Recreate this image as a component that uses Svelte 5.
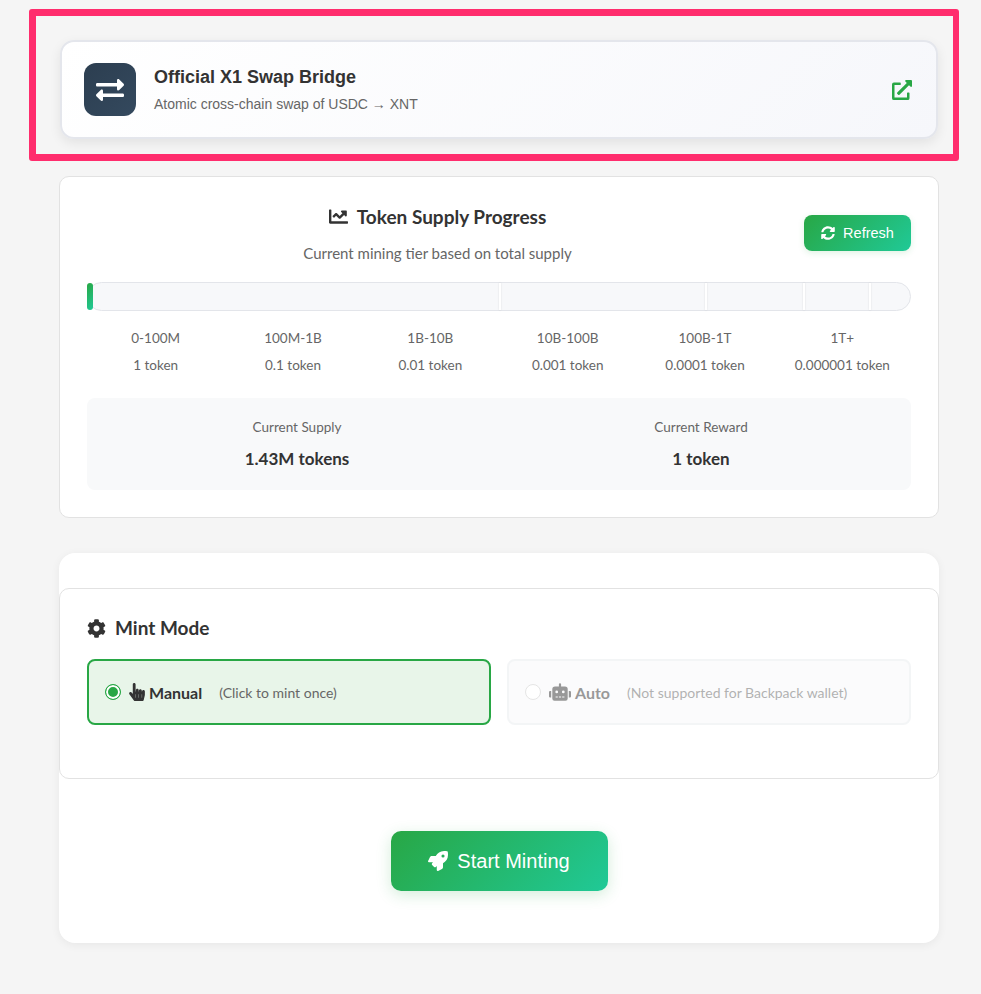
<script>
  const markers = [50, 75, 87, 95];
  const tiers = [
    { range: '0-100M', reward: '1 token' },
    { range: '100M-1B', reward: '0.1 token' },
    { range: '1B-10B', reward: '0.01 token' },
    { range: '10B-100B', reward: '0.001 token' },
    { range: '100B-1T', reward: '0.0001 token' },
    { range: '1T+', reward: '0.000001 token' },
  ];
</script>

<main class="page">
  <div class="highlight"></div>

  <a class="bridge" href="#bridge">
    <span class="bridge-icon">
      <svg viewBox="0 0 512 512" width="28" height="28" fill="#fff"><path d="M0 168v-16c0-13.255 10.745-24 24-24h360V80c0-21.367 25.899-32.042 40.971-16.971l80 80c9.372 9.373 9.372 24.569 0 33.941l-80 80C409.956 271.982 384 261.456 384 240v-48H24c-13.255 0-24-10.745-24-24zm488 152H128v-48c0-21.314-25.862-32.08-40.971-16.971l-80 80c-9.372 9.373-9.372 24.569 0 33.941l80 80C102.057 463.997 128 453.437 128 432v-48h360c13.255 0 24-10.745 24-24v-16c0-13.255-10.745-24-24-24z"/></svg>
    </span>
    <span class="bridge-text">
      <strong>Official X1 Swap Bridge</strong>
      <small>Atomic cross-chain swap of USDC → XNT</small>
    </span>
    <svg class="bridge-link" viewBox="0 0 512 512" width="20" height="20" fill="#28a745"><path d="M432,320H400a16,16,0,0,0-16,16V448H64V128H208a16,16,0,0,0,16-16V80a16,16,0,0,0-16-16H48A48,48,0,0,0,0,112V464a48,48,0,0,0,48,48H400a48,48,0,0,0,48-48V336A16,16,0,0,0,432,320ZM488,0h-128c-21.37,0-32.05,25.91-17,41l35.73,35.73L135,320.37a24,24,0,0,0,0,34L157.67,377a24,24,0,0,0,34,0L435.28,133.32,471,169c15,15,41,4.5,41-17V24A24,24,0,0,0,488,0Z"/></svg>
  </a>

  <section class="supply">
    <header class="supply-head">
      <div class="supply-title">
        <h2>
          <svg viewBox="0 0 512 512" width="19" height="19" fill="#333"><path d="M496 384H64V80c0-8.84-7.16-16-16-16H16C7.16 64 0 71.16 0 80v336c0 17.67 14.33 32 32 32h464c8.84 0 16-7.16 16-16v-32c0-8.84-7.16-16-16-16zM464 96H345.94c-21.38 0-32.09 25.85-16.97 40.97l32.4 32.4L288 242.75l-73.37-73.37c-12.5-12.5-32.76-12.5-45.25 0l-68.69 68.69c-6.25 6.25-6.25 16.38 0 22.63l22.62 22.62c6.25 6.25 16.38 6.25 22.63 0L192 237.25l73.37 73.37c12.5 12.5 32.76 12.5 45.25 0l96-96 32.4 32.4c15.12 15.12 40.97 4.41 40.97-16.97V112c.01-8.84-7.15-16-15.99-16z"/></svg>
          Token Supply Progress
        </h2>
        <p>Current mining tier based on total supply</p>
      </div>
      <button class="refresh">
        <svg viewBox="0 0 512 512" width="14" height="14" fill="#fff"><path d="M370.72 133.28C339.458 104.008 298.888 87.962 255.848 88c-77.458.068-144.328 53.178-162.791 126.85-1.344 5.363-6.122 9.15-11.651 9.15H24.103c-7.498 0-13.194-6.807-11.807-14.176C33.933 94.924 134.813 8 256 8c66.448 0 126.791 26.136 171.315 68.685L463.03 40.97C478.149 25.851 504 36.559 504 57.941V192c0 13.255-10.745 24-24 24H345.941c-21.382 0-32.09-25.851-16.971-40.971l41.75-41.749zM32 296h134.059c21.382 0 32.09 25.851 16.971 40.971l-41.75 41.75c31.262 29.273 71.835 45.319 114.876 45.28 77.418-.07 144.315-53.144 162.787-126.849 1.344-5.363 6.122-9.15 11.651-9.15h57.304c7.498 0 13.194 6.807 11.807 14.176C478.067 417.076 377.187 504 256 504c-66.448 0-126.791-26.136-171.315-68.685L48.97 471.03C33.851 486.149 8 475.441 8 454.059V320c0-13.255 10.745-24 24-24z"/></svg>
        Refresh
      </button>
    </header>

    <div class="bar">
      <div class="bar-fill"></div>
      {#each markers as m}
        <span class="bar-mark" style="left: {m}%"></span>
      {/each}
    </div>

    <div class="tiers">
      {#each tiers as t}
        <div class="tier">
          <span>{t.range}</span>
          <span>{t.reward}</span>
        </div>
      {/each}
    </div>

    <div class="stats">
      <div class="stat">
        <span>Current Supply</span>
        <strong>1.43M tokens</strong>
      </div>
      <div class="stat">
        <span>Current Reward</span>
        <strong>1 token</strong>
      </div>
    </div>
  </section>

  <section class="mint">
    <div class="mode">
      <h3>
        <svg viewBox="0 0 512 512" width="19" height="19" fill="#333"><path d="M487.4 315.7l-42.6-24.6c4.3-23.2 4.3-47 0-70.2l42.6-24.6c4.9-2.8 7.1-8.6 5.5-14-11.1-35.6-30-67.8-54.7-94.6-3.8-4.1-10-5.1-14.8-2.3L380.8 110c-17.9-15.4-38.5-27.3-60.8-35.1V25.8c0-5.6-3.9-10.5-9.4-11.7-36.7-8.2-74.3-7.8-109.2 0-5.5 1.2-9.4 6.1-9.4 11.7V75c-22.2 7.9-42.8 19.8-60.8 35.1L88.7 85.5c-4.9-2.8-11-1.9-14.8 2.3-24.7 26.7-43.6 58.9-54.7 94.6-1.7 5.4.6 11.2 5.5 14L67.3 221c-4.3 23.2-4.3 47 0 70.2l-42.6 24.6c-4.9 2.8-7.1 8.6-5.5 14 11.1 35.6 30 67.8 54.7 94.6 3.8 4.1 10 5.1 14.8 2.3l42.6-24.6c17.9 15.4 38.5 27.3 60.8 35.1v49.2c0 5.6 3.9 10.5 9.4 11.7 36.7 8.2 74.3 7.8 109.2 0 5.5-1.2 9.4-6.1 9.4-11.7v-49.2c22.2-7.9 42.8-19.8 60.8-35.1l42.6 24.6c4.9 2.8 11 1.9 14.8-2.3 24.7-26.7 43.6-58.9 54.7-94.6 1.5-5.5-.7-11.3-5.6-14.1zM256 336c-44.1 0-80-35.9-80-80s35.9-80 80-80 80 35.9 80 80-35.9 80-80 80z"/></svg>
        Mint Mode
      </h3>
      <div class="options">
        <label class="option active">
          <span class="radio"></span>
          <svg viewBox="0 0 448 512" width="16" height="18" fill="#333"><path d="M448 240v96c0 3.084-.356 6.159-1.063 9.162l-32 136C410.686 499.23 394.562 512 376 512H168a40.004 40.004 0 0 1-32.35-16.473l-127.997-176c-12.993-17.866-9.043-42.883 8.822-55.876 17.867-12.994 42.884-9.043 55.877 8.823L104 315.992V40c0-22.091 17.908-40 40-40s40 17.909 40 40v200h8v-40c0-22.091 17.908-40 40-40s40 17.909 40 40v40h8v-24c0-22.091 17.908-40 40-40s40 17.909 40 40v24h8c0-22.091 17.908-40 40-40s40 17.909 40 40zm-256 80h-8v96h8v-96zm88 0h-8v96h8v-96zm88 0h-8v96h8v-96z"/></svg>
          <b>Manual</b>
          <em>(Click to mint once)</em>
        </label>
        <label class="option disabled">
          <span class="radio"></span>
          <svg viewBox="0 0 640 512" width="22" height="18" fill="#333"><path d="M32,224H64V416H32A31.96166,31.96166,0,0,1,0,384V256A31.96166,31.96166,0,0,1,32,224Zm512-48V448a64.06328,64.06328,0,0,1-64,64H160a64.06328,64.06328,0,0,1-64-64V176a79.974,79.974,0,0,1,80-80H288V32a32,32,0,0,1,64,0V96H464A79.974,79.974,0,0,1,544,176ZM264,256a40,40,0,1,0-40,40A39.997,39.997,0,0,0,264,256Zm-8,128H192v32h64Zm96,0H288v32h64ZM456,256a40,40,0,1,0-40,40A39.997,39.997,0,0,0,456,256Zm-8,128H384v32h64ZM640,256V384a31.96166,31.96166,0,0,1-32,32H576V224h32A31.96166,31.96166,0,0,1,640,256Z"/></svg>
          <b>Auto</b>
          <em>(Not supported for Backpack wallet)</em>
        </label>
      </div>
    </div>

    <div class="start-row">
      <button class="start">
        <svg viewBox="0 0 512 512" width="20" height="20" fill="#fff"><path d="M505.12019,19.09375c-1.18945-5.53125-6.65819-11-12.207-12.1875C460.716,0,435.507,0,410.40747,0,307.17523,0,245.26909,55.20312,199.05238,128H94.83772c-16.34763.01562-35.55658,11.875-42.88664,26.48438L2.51562,253.29688A28.4,28.4,0,0,0,0,264a24.00867,24.00867,0,0,0,24.00582,24H127.81618l-22.47457,22.46875c-11.36521,11.36133-12.99607,32.25781,0,45.25L156.24582,406.625c11.15623,11.1875,32.15619,13.15625,45.27726,0l22.47457-22.46875V488a24.00867,24.00867,0,0,0,24.00581,24,28.55934,28.55934,0,0,0,10.707-2.51562l98.72834-49.39063c14.62888-7.29687,26.50776-26.5,26.50776-42.85937V312.79688c72.59753-46.3125,128.03493-108.40626,128.03493-211.09376C512.07526,76.5,512.07526,51.29688,505.12019,19.09375ZM384.04033,168A40,40,0,1,1,424.05,128,40.02322,40.02322,0,0,1,384.04033,168Z"/></svg>
        Start Minting
      </button>
    </div>
  </section>
</main>

<style>
  :global(body) {
    margin: 0;
    background: #f5f5f5;
    color: #333;
    font-family: Lato, "Open Sans", sans-serif;
  }

  .page {
    position: relative;
    box-sizing: border-box;
    width: 981px;
    min-height: 994px;
    padding: 40px 42px 51px 59px;
  }

  .highlight {
    position: absolute;
    left: 29px;
    top: 9px;
    width: 930px;
    height: 152px;
    box-sizing: border-box;
    border: solid #ff2d6d;
    border-width: 7px 6px 7px 7px;
    border-radius: 3px;
    pointer-events: none;
  }

  .bridge {
    display: flex;
    align-items: center;
    box-sizing: border-box;
    height: 99px;
    margin: 0 1px 37px;
    padding: 0 24px 0 22px;
    gap: 18px;
    border: 2px solid #e4e6ec;
    border-radius: 14px;
    background: linear-gradient(135deg, #fff 0%, #f6f7fb 100%);
    box-shadow: 0 4px 12px rgba(0, 0, 0, 0.08);
    color: inherit;
    text-decoration: none;
    font-family: "Liberation Sans", Arial, sans-serif;
  }

  .bridge-icon {
    display: flex;
    align-items: center;
    justify-content: center;
    width: 52px;
    height: 53px;
    border-radius: 12px;
    background: linear-gradient(135deg, #2c3e50, #34495e);
  }

  .bridge-text {
    display: flex;
    flex: 1;
    flex-direction: column;
    gap: 7px;
  }

  .bridge-text strong {
    font-size: 18px;
    line-height: 22px;
  }

  .bridge-text small {
    font-size: 14px;
    line-height: 18px;
    color: #666;
  }

  .supply {
    box-sizing: border-box;
    height: 342px;
    padding: 26px 27px;
    border: 1px solid #e2e2e2;
    border-radius: 10px;
    background: #fff;
  }

  .supply-head {
    display: flex;
    align-items: center;
    gap: 16px;
    height: 60px;
    margin-bottom: 19px;
  }

  .supply-title {
    flex: 1;
    text-align: center;
  }

  h2 {
    display: flex;
    align-items: center;
    justify-content: center;
    gap: 9px;
    margin: 0 0 13px;
    font-size: 19px;
    line-height: 26px;
    font-weight: 700;
  }

  .supply-title p {
    margin: 0;
    font-size: 15px;
    line-height: 20px;
    color: #666;
  }

  .refresh {
    display: flex;
    align-items: center;
    justify-content: center;
    gap: 8px;
    width: 107px;
    height: 36px;
    padding: 0;
    border: 0;
    border-radius: 8px;
    background: linear-gradient(135deg, #28a745, #20c997);
    box-shadow: 0 2px 6px rgba(40, 167, 69, 0.15);
    color: #fff;
    font: 14px "Liberation Sans", Arial, sans-serif;
    font-size: 14.5px;
  }

  .bar {
    position: relative;
    box-sizing: border-box;
    height: 29px;
    border: 1px solid #e3e5ea;
    border-radius: 15px;
    background: #f7f8fa;
  }

  .bar-fill {
    position: absolute;
    left: -1px;
    top: 0;
    bottom: 0;
    width: 6px;
    border-radius: 14px;
    background: linear-gradient(135deg, #28a745, #20c997);
  }

  .bar-mark {
    position: absolute;
    top: 0;
    bottom: 0;
    width: 2px;
    background: #fff;
    box-shadow: 0 0 2px rgba(0, 0, 0, 0.12);
  }

  .tiers {
    display: grid;
    grid-template-columns: repeat(6, 1fr);
    margin-top: 18px;
  }

  .tier {
    display: flex;
    flex-direction: column;
    gap: 8px;
    align-items: center;
    font-size: 13.5px;
    line-height: 19px;
    color: #666;
  }

  .stats {
    display: grid;
    grid-template-columns: 1fr 1fr;
    box-sizing: border-box;
    height: 92px;
    margin-top: 23px;
    padding: 0 8px;
    border-radius: 8px;
    background: #f8f9fa;
  }

  .stat {
    display: flex;
    flex-direction: column;
    align-items: center;
    justify-content: center;
    gap: 12px;
  }

  .stat span {
    font-size: 13.5px;
    line-height: 18px;
    color: #666;
  }

  .stat strong {
    font-size: 17px;
    line-height: 22px;
  }

  .mint {
    box-sizing: border-box;
    height: 390px;
    margin-top: 35px;
    padding-top: 35px;
    border-radius: 16px;
    background: #fff;
    box-shadow: 0 2px 10px rgba(0, 0, 0, 0.06);
  }

  .mode {
    box-sizing: border-box;
    height: 191px;
    padding: 26px 27px;
    border: 1px solid #e2e2e2;
    border-radius: 10px;
    background: #fff;
  }

  h3 {
    display: flex;
    align-items: center;
    gap: 9px;
    margin: 0 0 18px;
    font-size: 19px;
    line-height: 26px;
    font-weight: 700;
  }

  .options {
    display: grid;
    grid-template-columns: 1fr 1fr;
    gap: 16px;
  }

  .option {
    display: flex;
    align-items: center;
    box-sizing: border-box;
    height: 66px;
    padding: 0 16px;
    border: 2px solid #e9ecef;
    border-radius: 8px;
    font-size: 16px;
  }

  .option.active {
    border-color: #28a745;
    background: #e8f5e9;
  }

  .option.disabled {
    background: #f8f9fa;
    opacity: 0.5;
    padding-left: 16px;
  }

  .radio {
    box-sizing: border-box;
    width: 16px;
    height: 16px;
    margin-right: 8px;
    border: 1px solid #ccc;
    border-radius: 50%;
    background: #fff;
  }

  .active .radio {
    border-color: #28a745;
    background: #28a745;
    box-shadow: inset 0 0 0 2px #fff;
  }

  .option b {
    margin-left: 4px;
    font-weight: 700;
  }

  .option em {
    margin-left: 17px;
    font-style: normal;
    font-size: 14px;
    color: #666;
  }

  .start-row {
    display: flex;
    justify-content: center;
    padding-top: 52px;
  }

  .start {
    display: flex;
    align-items: center;
    justify-content: center;
    gap: 9px;
    width: 217px;
    height: 60px;
    padding: 0;
    border: 0;
    border-radius: 10px;
    background: linear-gradient(135deg, #28a745, #20c997);
    box-shadow: 0 4px 15px rgba(40, 167, 69, 0.2);
    color: #fff;
    font: 20px "Liberation Sans", Arial, sans-serif;
  }
</style>
